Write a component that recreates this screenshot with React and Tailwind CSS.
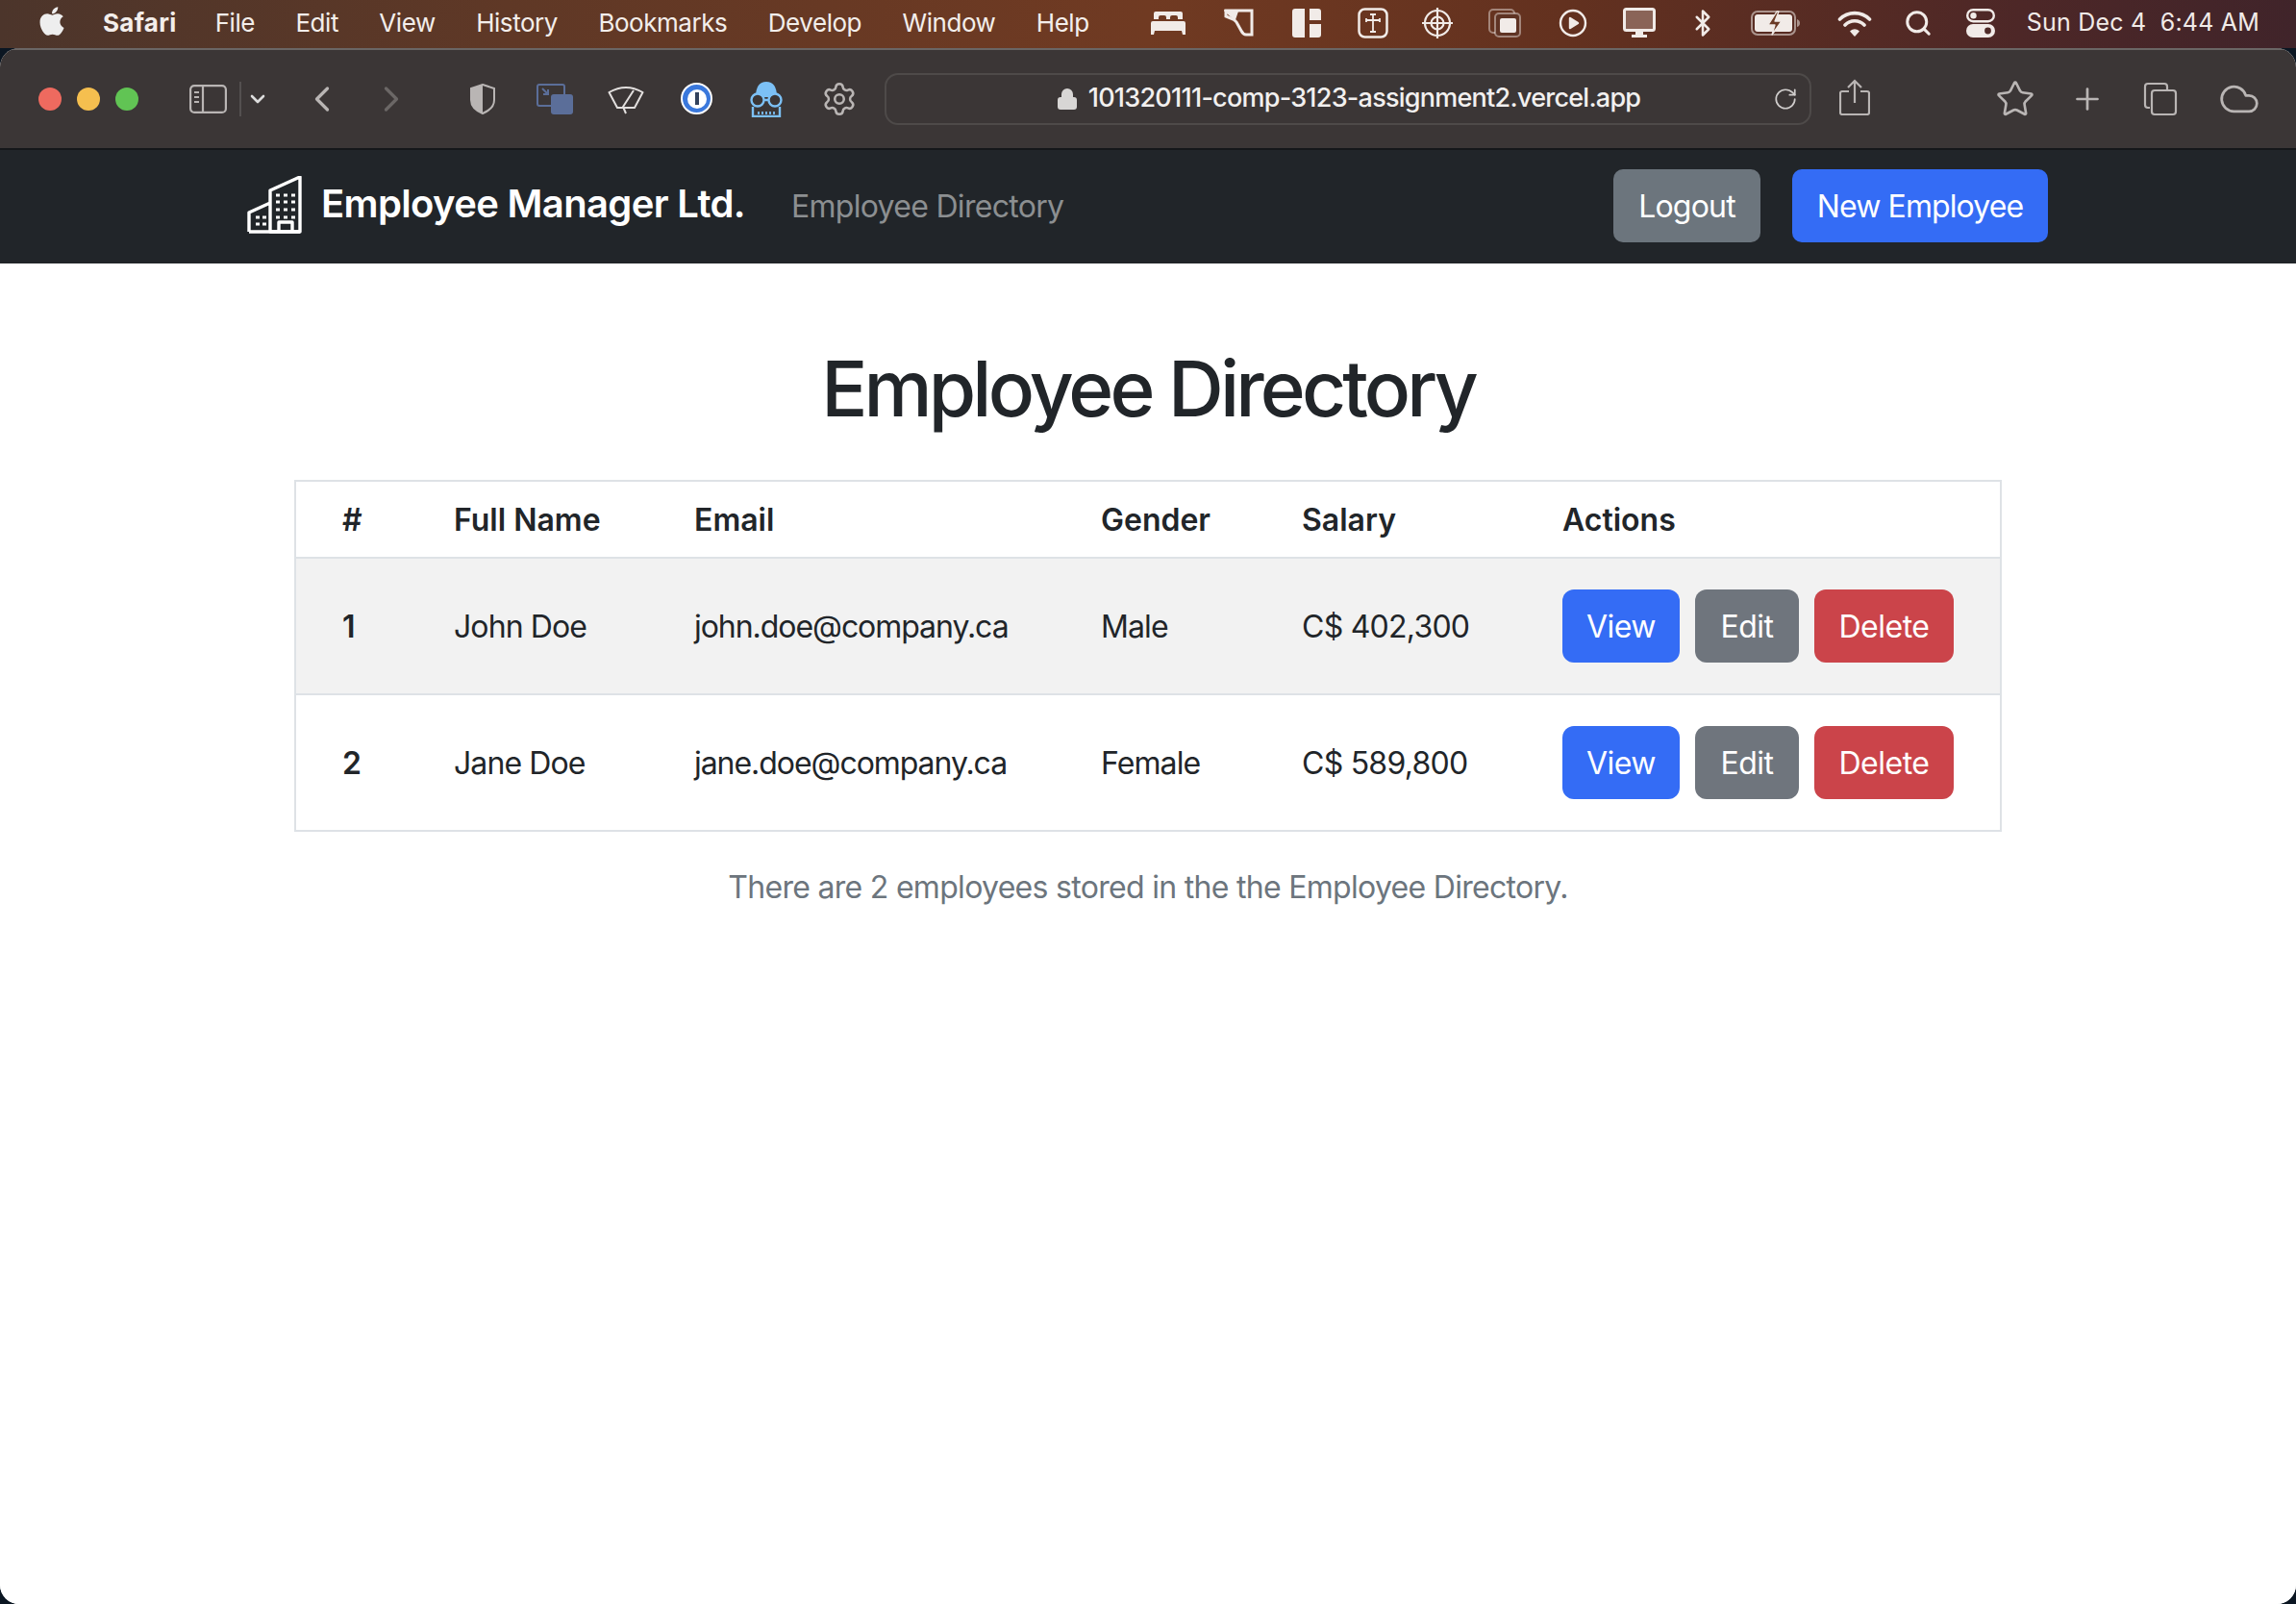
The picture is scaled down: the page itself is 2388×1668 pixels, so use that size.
import { Bluetooth, ChevronDown, ChevronLeft, ChevronRight, Cloud, Lock, Plus, RotateCw, Search, Settings, Star } from "lucide-react";
import { FaApple } from "react-icons/fa";

const menuItems = ["File", "Edit", "View", "History", "Bookmarks", "Develop", "Window", "Help"];

function MenuBar() {
  return (
    <div className="h-[50px] shrink-0 flex items-center pl-[39px] pr-[38px] pb-[3px] text-[26px] text-[#f3eeeb] bg-[linear-gradient(90deg,#4c352b_0%,#5f3826_22%,#703a22_50%,#63311f_68%,#4d2727_88%,#40242a_100%)] font-['Inter',sans-serif]">
      <FaApple className="w-[30px] h-[34px] text-[#eeeeee] -mt-[3px]" />
      <span className="ml-[38px] font-bold tracking-[0.3px]">Safari</span>
      <div className="ml-[40px] flex gap-[42.4px] tracking-[-0.45px]">
        {menuItems.map((label) => (
          <span key={label}>{label}</span>
        ))}
      </div>
      <div className="ml-auto flex items-center text-[#f1ebe8]">
        <svg className="w-9 h-6" viewBox="0 0 36 24" fill="currentColor"><path d="M5 0h26a2 2 0 0 1 2 2v6h-5V6a2 2 0 0 0-2-2h-4a2 2 0 0 0-2 2v2h-4V6a2 2 0 0 0-2-2h-4a2 2 0 0 0-2 2v2H3V2a2 2 0 0 1 2-2zM2 10h32a2 2 0 0 1 2 2v12h-3l-1-4H4l-1 4H0V12a2 2 0 0 1 2-2z" /></svg>
        <svg className="w-8 h-8 ml-[40px]" viewBox="0 0 32 32" fill="none" stroke="currentColor" strokeWidth="3"><path d="M2 3h27v25h-6q-3 0-5-4l-5-9q-2-3-6-4l-5-2z" /><path d="M3 4l8 7 2-6z" fill="currentColor" /></svg>
        <svg className="w-[30px] h-[30px] ml-[39px]" viewBox="0 0 30 30" fill="currentColor"><path d="M3 0h10v30H3a3 3 0 0 1-3-3V3a3 3 0 0 1 3-3zM18 0h9a3 3 0 0 1 3 3v9H18zM18 16h12v11a3 3 0 0 1-3 3h-9z" /></svg>
        <svg className="w-8 h-8 ml-[38px]" viewBox="0 0 32 32" fill="none" stroke="currentColor"><rect x="1.5" y="1.5" width="29" height="29" rx="6" strokeWidth="2.5" /><path d="M16 7v18M9 13h14M13 7h6M13 25h6M9 11v4M23 11v4" strokeWidth="1.8" /></svg>
        <svg className="w-8 h-8 ml-[35px]" viewBox="0 0 32 32" fill="none" stroke="currentColor" strokeWidth="2.2"><circle cx="16" cy="16" r="13" /><circle cx="16" cy="16" r="6.5" /><path d="M16 0v32M0 16h32" /></svg>
        <svg className="w-[34px] h-[30px] ml-[37px]" viewBox="0 0 34 30" fill="none"><rect x="1" y="1" width="26" height="24" rx="4" stroke="currentColor" strokeOpacity=".45" strokeWidth="2" /><rect x="7" y="5" width="26" height="24" rx="4" fill="#5f3324" stroke="currentColor" strokeOpacity=".45" strokeWidth="2" /><rect x="12" y="10" width="17" height="15" rx="2" fill="currentColor" /></svg>
        <svg className="w-[30px] h-[30px] ml-[39px]" viewBox="0 0 30 30" fill="none" stroke="currentColor" strokeWidth="2.4"><circle cx="15" cy="15" r="13" /><path d="M12 10l8 5-8 5z" fill="currentColor" strokeLinejoin="round" /></svg>
        <svg className="w-[34px] h-8 ml-[37px]" viewBox="0 0 34 32" fill="none"><rect x="1.5" y="1.5" width="31" height="22" rx="2" fill="#8a6458" stroke="currentColor" strokeWidth="3" /><path d="M13 24h8v4h4v3H9v-3h4z" fill="currentColor" /></svg>
        <Bluetooth className="w-[30px] h-[34px] ml-[34px]" strokeWidth={2} />
        <svg className="w-[52px] h-[26px] ml-[35px]" viewBox="0 0 52 26" fill="none"><rect x="1" y="1" width="45" height="24" rx="6" stroke="currentColor" strokeOpacity=".55" strokeWidth="2" /><rect x="4" y="4" width="39" height="18" rx="3" fill="currentColor" /><path d="M48 9q3 1 3 4t-3 4z" fill="currentColor" fillOpacity=".55" /><path d="M27 1l-9 14h7l-3 10 10-14h-7l4-10z" fill="#6b3a26" stroke="#f1ebe8" strokeWidth="1.3" strokeLinejoin="round" /></svg>
        <svg className="w-9 h-7 ml-[38px]" viewBox="0 0 36 28" fill="none" stroke="currentColor" strokeWidth="3.6" strokeLinecap="round"><path d="M2.5 10a22 22 0 0 1 31 0M8 16a14 14 0 0 1 20 0" /><path d="M14 22.5a6 6 0 0 1 8 0L18 27z" fill="currentColor" strokeWidth="1.5" strokeLinejoin="round" /></svg>
        <Search className="w-[30px] h-[30px] ml-[33px]" strokeWidth={2.4} />
        <svg className="w-[30px] h-[30px] ml-[35px]" viewBox="0 0 30 30" fill="none"><rect x="1.2" y="1.2" width="27.6" height="12" rx="6" stroke="currentColor" strokeWidth="2.4" /><circle cx="7.5" cy="7.2" r="3.2" fill="currentColor" /><rect y="16" width="30" height="14" rx="7" fill="currentColor" /><circle cx="22.5" cy="23" r="3.4" fill="#4f2a28" /></svg>
        <span className="ml-[33px] whitespace-pre text-[25px] tracking-[0.2px]">Sun Dec 4  6:44 AM</span>
      </div>
    </div>
  );
}

function Toolbar() {
  return (
    <div className="h-[106px] shrink-0 flex items-center bg-[#3b3636] border-t-2 border-[#6a6665] border-b-2 border-b-[#15171a] text-[#b9b5b4] pl-[40px] pb-[1px] font-['Inter',sans-serif]">
      <div className="flex gap-4">
        <div className="w-6 h-6 rounded-full bg-[#ee6a5f]" />
        <div className="w-6 h-6 rounded-full bg-[#f5bf4f]" />
        <div className="w-6 h-6 rounded-full bg-[#61c454]" />
      </div>
      <svg className="w-[39px] h-[30px] ml-[53px]" viewBox="0 0 39 30" fill="none" stroke="currentColor" strokeWidth="2.2"><rect x="1.1" y="1.1" width="36.8" height="27.8" rx="4" /><path d="M14 1v28M5 8h5M5 13h5M5 18h5" /></svg>
      <div className="w-[2px] h-9 bg-[#545050] ml-[13px]" />
      <ChevronDown className="w-6 h-6 ml-[5px] text-[#dddddd]" strokeWidth={2.6} />
      <ChevronLeft className="w-[44px] h-[44px] ml-[33px]" strokeWidth={1.8} />
      <ChevronRight className="w-[44px] h-[44px] ml-[28px] text-[#6b6766]" strokeWidth={1.8} />
      <svg className="w-7 h-8 ml-[59px]" viewBox="0 0 28 32" fill="none"><path d="M14 1l12 4v12q0 9-12 14Q2 26 2 17V5z" fill="#3b3636" stroke="currentColor" strokeWidth="2" /><path d="M14 1L2 5v12q0 9 12 14z" fill="currentColor" /></svg>
      <svg className="w-[38px] h-[32px] ml-[42px]" viewBox="0 0 38 32" fill="none"><rect x="1" y="1" width="28" height="22" rx="2" stroke="#5b6e99" strokeWidth="2" /><rect x="15" y="11" width="23" height="21" rx="3" fill="#5b6e99" /><path d="M6 5l6 6M7 11h5V6" stroke="#5b6e99" strokeWidth="2" /></svg>
      <svg className="w-[38px] h-[32px] ml-[36px]" viewBox="0 0 38 32" fill="none" stroke="#e2dfde" strokeWidth="2" strokeLinejoin="round"><path d="M1.5 9Q19-1 36.5 9L28 25H10z" /><path d="M19 31L16 24 27 7" /></svg>
      <div className="w-[33px] h-[33px] rounded-full bg-[#3a78dc] border-[2px] border-white ml-[38px] flex items-center justify-center">
        <div className="w-[20px] h-[20px] rounded-full bg-white flex items-center justify-center">
          <div className="w-[4px] h-[13px] bg-[#33425c]" />
        </div>
      </div>
      <svg className="w-[38px] h-[38px] ml-[37px]" viewBox="0 0 38 38" fill="none"><path d="M8 17Q8 1 19 1t11 16z" fill="#7cc0f5" /><circle cx="10" cy="20" r="6.5" fill="#3b3636" stroke="#7cc0f5" strokeWidth="2.4" /><circle cx="28" cy="20" r="6.5" fill="#3b3636" stroke="#7cc0f5" strokeWidth="2.4" /><path d="M16 20h6M5 27v10h28V27" stroke="#7cc0f5" strokeWidth="2.4" /><path d="M11 32v3M15 32v3M19 32v3M23 32v3M27 32v3" stroke="#7cc0f5" strokeWidth="1.8" /></svg>
      <Settings className="w-[38px] h-[38px] ml-[38px]" strokeWidth={1.6} />
      <div className="w-[964px] h-[54px] ml-[28px] rounded-[14px] border-2 border-[#4e4a49] flex items-center relative">
        <div className="flex-1 flex items-center justify-center gap-[10px] text-[#f2f0ef] text-[27px] font-medium tracking-[-0.75px]">
          <Lock className="w-6 h-[28px] text-[#d8d6d5] fill-[#d8d6d5]" strokeWidth={2} />
          <span>101320111-comp-3123-assignment2.vercel.app</span>
        </div>
        <RotateCw className="absolute right-[12px] w-[26px] h-[26px] text-[#cfcccb]" strokeWidth={1.6} />
      </div>
      <svg className="w-[32px] h-[38px] ml-[29px] -mt-[4px]" viewBox="0 0 32 38" fill="none" stroke="currentColor" strokeWidth="2.2"><path d="M10 13H3a2 2 0 0 0-2 2v20a2 2 0 0 0 2 2h26a2 2 0 0 0 2-2V15a2 2 0 0 0-2-2h-7M16 25V2M9 9l7-7 7 7" /></svg>
      <Star className="w-[42px] h-[42px] ml-[130px]" strokeWidth={1.5} />
      <Plus className="w-[36px] h-[36px] ml-[36px]" strokeWidth={1.8} />
      <svg className="w-[36px] h-[36px] ml-[40px]" viewBox="0 0 36 36" fill="none" stroke="currentColor" strokeWidth="2.2"><path d="M7 27H5a3 3 0 0 1-3-3V5a3 3 0 0 1 3-3h17a3 3 0 0 1 3 3v4" /><rect x="9" y="9" width="25" height="25" rx="3" /></svg>
      <Cloud className="w-[44px] h-[44px] ml-[42px]" strokeWidth={1.5} />
    </div>
  );
}

function Navbar() {
  return (
    <nav className="h-[118px] shrink-0 bg-[#212529] flex items-center pl-[257px] pr-[258px] pb-[2px]">
      <svg className="w-[58px] h-[60px] -mt-[2px]" viewBox="0 0 58 60" fill="none" stroke="#ffffff" strokeWidth="3.4" strokeLinejoin="round">
        <path d="M2 58V38l22-10M24 58V15L55 1v57z" />
        <path d="M2 58h53" />
        <path d="M33 58V48h14v10" />
        <path d="M30 20h4M38 20h4M46 20h4M30 27h4M38 27h4M46 27h4M30 35h4M38 35h4M46 35h4M30 43h4M38 43h4M46 43h4M9 43h4M16 43h4M9 50h4M16 50h4" strokeWidth="3" />
      </svg>
      <span className="ml-[19px] text-[40px] font-semibold text-white -mt-[4px] tracking-[-0.65px]">Employee Manager Ltd.</span>
      <span className="ml-[48px] pt-[2px] text-[32px] text-[#8c8f91] tracking-[-0.7px]">Employee Directory</span>
      <div className="ml-auto flex gap-[33px] text-[32px] text-white">
        <button className="h-[76px] w-[153px] pt-[2px] rounded-[10px] bg-[#6c757d] tracking-[-0.8px]">Logout</button>
        <button className="h-[76px] w-[266px] pt-[2px] rounded-[10px] bg-[#346cf5] tracking-[-0.9px]">New Employee</button>
      </div>
    </nav>
  );
}

function ActionButtons() {
  return (
    <div className="flex gap-4 text-white tracking-[-0.5px]">
      <button className="h-[76px] w-[122px] pt-[2px] rounded-xl bg-[#346cf5]">View</button>
      <button className="h-[76px] w-[108px] pt-[2px] rounded-xl bg-[#6f757d]">Edit</button>
      <button className="h-[76px] w-[145px] pt-[2px] rounded-xl bg-[#cb444a]">Delete</button>
    </div>
  );
}

const employees = [
  { id: 1, name: "John Doe", email: "john.doe@company.ca", gender: "Male", salary: "C$ 402,300" },
  { id: 2, name: "Jane Doe", email: "jane.doe@company.ca", gender: "Female", salary: "C$ 589,800" },
];

export default function App() {
  return (
    <div className="h-[1668px] flex flex-col bg-[#0b1622] overflow-hidden font-['Inter',sans-serif] text-[32px] text-[#212529]">
      <MenuBar />
      <div className="flex-1 flex flex-col rounded-[20px] overflow-hidden bg-white">
        <Toolbar />
        <Navbar />
        <main className="flex-1 bg-white">
          <h1 className="mt-[82px] text-center text-[80px] leading-[96px] font-medium tracking-[-3.85px]">Employee Directory</h1>
          <table className="mt-[47px] ml-[306px] w-[1776px] table-fixed border-collapse border-2 border-[#dee2e6]">
            <colgroup>
              <col className="w-[117px]" />
              <col className="w-[250px]" />
              <col className="w-[423px]" />
              <col className="w-[209px]" />
              <col className="w-[271px]" />
              <col />
            </colgroup>
            <thead>
              <tr className="border-b-2 border-[#dee2e6] text-left h-[80px]">
                <th className="pl-12 pt-[2px] font-semibold">#</th>
                <th className="pl-12 pt-[2px] font-semibold">Full Name</th>
                <th className="pl-12 pt-[2px] font-semibold">Email</th>
                <th className="pl-12 pt-[2px] font-semibold">Gender</th>
                <th className="pl-12 pt-[2px] font-semibold">Salary</th>
                <th className="pl-12 pt-[2px] font-semibold">Actions</th>
              </tr>
            </thead>
            <tbody>
              {employees.map((e) => (
                <tr key={e.id} className={`h-[142px] border-b-2 border-[#dee2e6] tracking-[-0.9px] ${e.id === 1 ? "bg-[#f2f2f2]" : "bg-white"}`}>
                  <td className="pl-12 pt-[2px] font-semibold">{e.id}</td>
                  <td className="pl-12 pt-[2px]">{e.name}</td>
                  <td className="pl-12 pt-[2px] tracking-[-1.05px]">{e.email}</td>
                  <td className="pl-12 pt-[2px]">{e.gender}</td>
                  <td className="pl-12 pt-[2px] tracking-[-0.75px]">{e.salary}</td>
                  <td className="pl-12"><ActionButtons /></td>
                </tr>
              ))}
            </tbody>
          </table>
          <p className="mt-[34px] text-center text-[#6c757d] tracking-[-0.7px]">There are 2 employees stored in the the Employee Directory.</p>
        </main>
      </div>
    </div>
  );
}
